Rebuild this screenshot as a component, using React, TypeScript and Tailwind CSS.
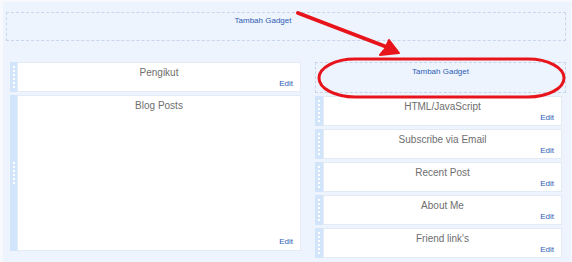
import React from 'react';

const LEFT = [
  { title: 'Pengikut', h: 'h-[30px]' },
  { title: 'Blog Posts', h: 'h-[156px]' },
];

const RIGHT = ['HTML/JavaScript', 'Subscribe via Email', 'Recent Post', 'About Me', "Friend link's"];

function Handle({ w }: { w: string }) {
  return (
    <div className={`${w} flex shrink-0 flex-col items-center justify-center gap-[2px] bg-[#d3e5fa]`}>
      {[0, 1, 2, 3, 4, 5].map((i) => (
        <span key={i} className="block h-[2px] w-[2px] bg-white" />
      ))}
    </div>
  );
}

function Widget({ title, h, handleW }: { title: string; h: string; handleW: string }) {
  return (
    <div className={`flex ${h}`}>
      <Handle w={handleW} />
      <div className="flex flex-1 flex-col border border-[#e3ebf7] bg-white px-[7px] pt-[4px] pb-[3px]">
        <div className="text-center text-[10px] leading-[12px] text-[#6e6e6e]">{title}</div>
        <div className="mt-auto text-right text-[8px] leading-[10px] text-[#2d5cb5]">Edit</div>
      </div>
    </div>
  );
}

export default function App() {
  return (
    <div
      className="relative h-[262px] w-[572px] overflow-hidden border-l-[3px] border-t-[2px] border-r border-[#f7f9fd] bg-[#eef4fd]"
      style={{ fontFamily: '"Liberation Sans", Arial, sans-serif' }}
    >
      <div className="ml-[3px] mt-[10px] h-[29px] w-[560px] border border-dashed border-[#c8d5ea] pt-[3px] pr-[46px] text-center text-[8px] leading-[10px] text-[#2d5cb5]">
        Tambah Gadget
      </div>

      <div className="mt-[21px] flex">
        <div className="ml-[7px] flex w-[291px] flex-col gap-[3px]">
          {LEFT.map((w) => (
            <Widget key={w.title} title={w.title} h={w.h} handleW="w-[7px]" />
          ))}
        </div>

        <div className="ml-[14px] flex w-[251px] flex-col gap-[3px]">
          <div className="h-[31px] border border-dashed border-[#c8d5ea] pt-[4px] text-center text-[8px] leading-[10px] text-[#2d5cb5]">
            Tambah Gadget
          </div>
          <div className="flex w-[247px] flex-col gap-[3px]">
            {RIGHT.map((t) => (
              <Widget key={t} title={t} h="h-[30px]" handleW="w-[8px]" />
            ))}
          </div>
        </div>
      </div>

      {/* red annotation: arrow + ring */}
      <svg className="pointer-events-none absolute left-[-3px] top-[-2px]" width="572" height="262" viewBox="0 0 572 262">
        <line x1="298" y1="13" x2="392" y2="49" stroke="#e8141b" strokeWidth="4" strokeLinecap="round" />
        <path d="M399 53 L380 55 L385 49 L389 40 Z" fill="#e8141b" stroke="#e8141b" strokeWidth="2" strokeLinejoin="round" />
        <rect x="319" y="59" width="245" height="38" rx="36" ry="19" fill="none" stroke="#e8141b" strokeWidth="3" />
      </svg>
    </div>
  );
}
